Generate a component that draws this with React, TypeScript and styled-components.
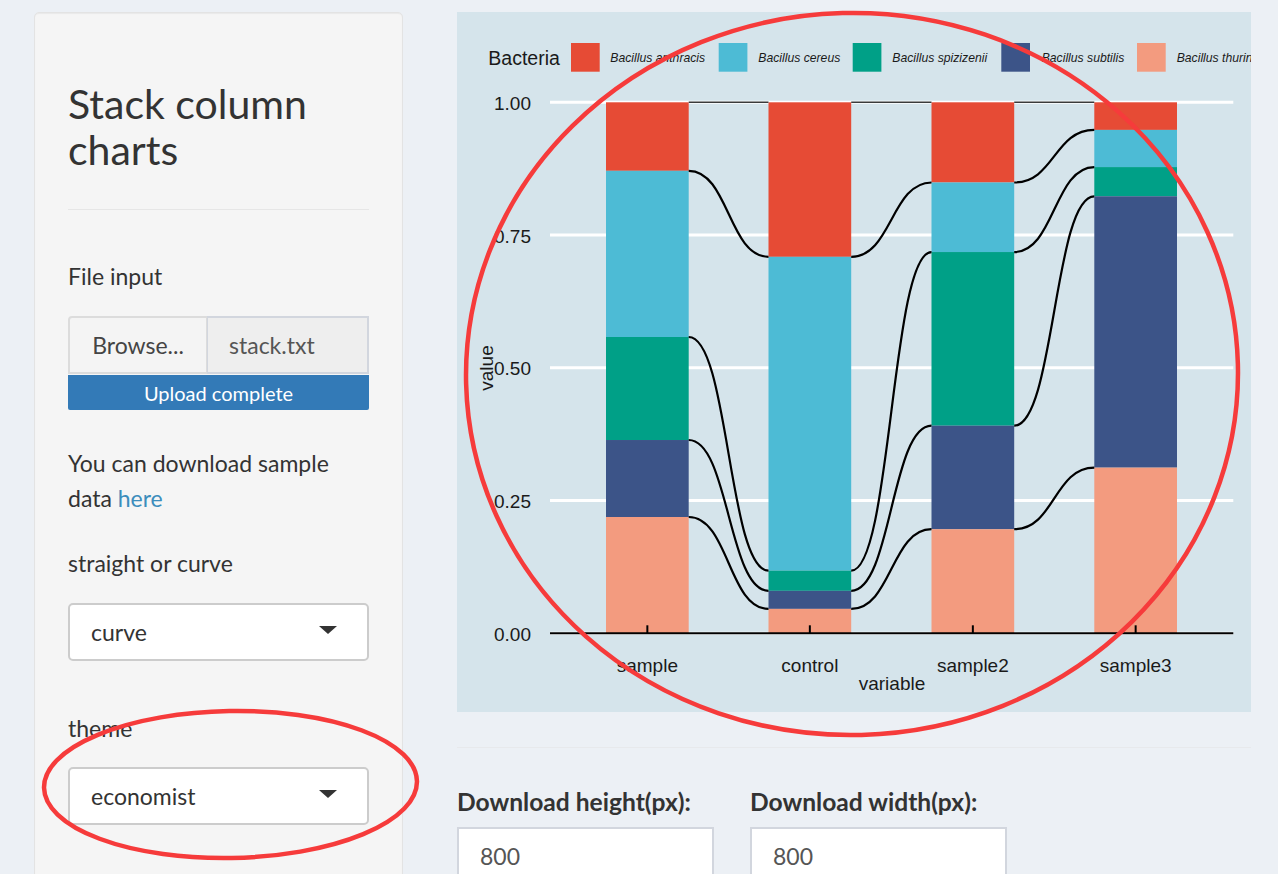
import React from 'react';
import styled, { createGlobalStyle } from 'styled-components';

const GlobalStyle = createGlobalStyle`
  html, body {
    margin: 0;
    padding: 0;
    overflow: hidden;
    background: #ecf0f5;
  }
  body {
    font-family: "Lato", "Noto Sans", sans-serif;
    color: #333;
  }
`;

const Page = styled.div`
  position: relative;
  display: flex;
  align-items: flex-start;
  gap: 54px;
  width: 1278px;
  height: 874px;
  box-sizing: border-box;
  padding: 12px 0 0 34px;
  overflow: hidden;
`;

const Sidebar = styled.aside`
  flex: 0 0 auto;
  width: 369px;
  height: 900px;
  box-sizing: border-box;
  background: #f5f5f5;
  border: 1px solid #e3e3e3;
  border-radius: 5px;
  box-shadow: inset 0 1px 1px rgba(0, 0, 0, 0.05);
  padding: 68px 33px 0;
  display: flex;
  flex-direction: column;
`;

const Title = styled.h2`
  margin: 0;
  font-size: 41px;
  line-height: 46px;
  font-weight: 400;
  color: #333;
`;

const Rule = styled.hr<{ $mt: number; $color?: string }>`
  margin: ${(p) => p.$mt}px 0 0;
  border: 0;
  border-top: 1px solid ${(p) => p.$color || '#e6e6e6'};
  height: 0;
`;

const Label = styled.div<{ $mt: number }>`
  margin-top: ${(p) => p.$mt}px;
  font-size: 23px;
  line-height: 30px;
  color: #333;
`;

const Paragraph = styled.p<{ $mt: number }>`
  margin: ${(p) => p.$mt}px 0 0;
  font-size: 23px;
  line-height: 35px;
  color: #333;
`;

const Link = styled.a`
  color: #3c8dbc;
  text-decoration: none;
`;

const FileGroup = styled.div<{ $mt: number }>`
  margin-top: ${(p) => p.$mt}px;
  display: flex;
  height: 58px;
`;

const BrowseButton = styled.div`
  flex: 0 0 139px;
  box-sizing: border-box;
  display: flex;
  align-items: center;
  justify-content: center;
  background: #f4f4f4;
  border: 2px solid #dcdcdc;
  border-right-width: 1px;
  border-radius: 4px 0 0 0;
  font-size: 23px;
  color: #444;
`;

const FileName = styled.div`
  flex: 1 1 auto;
  box-sizing: border-box;
  display: flex;
  align-items: center;
  padding-left: 21px;
  background: #eeeeee;
  border: 2px solid #d2d6de;
  border-left-width: 1px;
  font-size: 23px;
  color: #555;
`;

const Progress = styled.div`
  margin-top: 1px;
  height: 35px;
  background: #337ab7;
  border-radius: 0 0 2px 2px;
  color: #fff;
  font-size: 20px;
  display: flex;
  align-items: center;
  justify-content: center;
`;

const SelectBox = styled.div<{ $mt: number }>`
  margin-top: ${(p) => p.$mt}px;
  height: 58px;
  box-sizing: border-box;
  background: #fff;
  border: 2px solid #cccccc;
  border-radius: 5px;
  display: flex;
  align-items: center;
  justify-content: space-between;
  padding: 0 30px 0 21px;
  font-size: 23px;
  color: #333;
`;

const Caret = styled.span`
  width: 0;
  height: 0;
  border-left: 9px solid transparent;
  border-right: 9px solid transparent;
  border-top: 8px solid #333;
  margin-top: -4px;
`;

const Main = styled.main`
  flex: 0 0 auto;
  width: 794px;
  display: flex;
  flex-direction: column;
`;

const ChartPanel = styled.div`
  width: 794px;
  height: 700px;
  background: #d5e4eb;
`;

const DownloadRow = styled.div`
  margin-top: 39px;
  display: flex;
  gap: 36px;
`;

const Field = styled.div`
  width: 257px;
  display: flex;
  flex-direction: column;
`;

const FieldLabel = styled.label`
  font-size: 24.6px;
  font-weight: 700;
  line-height: 30px;
  color: #333;
  white-space: nowrap;
`;

const NumberBox = styled.div`
  margin-top: 10px;
  height: 60px;
  box-sizing: border-box;
  background: #fff;
  border: 2px solid #d2d6de;
  padding: 13px 0 0 21px;
  font-size: 23px;
  color: #555;
`;

const Overlay = styled.svg`
  position: absolute;
  left: 0;
  top: 0;
  width: 1278px;
  height: 874px;
  pointer-events: none;
`;

const COLORS = ['#E64B35', '#4DBBD5', '#00A087', '#3C5488', '#F39B7F'];
const SPECIES = [
  'Bacillus anthracis',
  'Bacillus cereus',
  'Bacillus spizizenii',
  'Bacillus subtilis',
  'Bacillus thuringiensis',
];
const GROUPS = ['sample', 'control', 'sample2', 'sample3'];
const STACKS = [
  [1, 0.871, 0.558, 0.364, 0.219, 0],
  [1, 0.709, 0.118, 0.08, 0.046, 0],
  [1, 0.849, 0.718, 0.391, 0.196, 0],
  [1, 0.948, 0.878, 0.823, 0.312, 0],
];
const BAR_X = [149, 311.5, 474.5, 637.3];
const BAR_W = 82.7;
const yOf = (v: number) => 621.3 - 531 * v;

const LEGEND_KEYS = [114, 261.7, 395.7, 544.3, 680];
const LEGEND_TEXT = [153.3, 301.3, 435.3, 584.7, 719.7];

const Chart: React.FC = () => {
  const curves: { d: string; top: boolean }[] = [];
  for (let j = 0; j < 3; j++) {
    const x1 = BAR_X[j] + BAR_W;
    const x2 = BAR_X[j + 1];
    const xm = (x1 + x2) / 2;
    for (let k = 0; k < 5; k++) {
      const y1 = yOf(STACKS[j][k]);
      const y2 = yOf(STACKS[j + 1][k]);
      curves.push({ d: `M${x1} ${y1} C${xm} ${y1} ${xm} ${y2} ${x2} ${y2}`, top: k === 0 });
    }
  }
  return (
    <svg width="794" height="700" viewBox="0 0 794 700" style={{ display: 'block' }}>
      <g fontFamily='"Liberation Sans", Arial, sans-serif' fill="#1a1a1a">
        <text x="31.3" y="46" fontSize="19.5" dominantBaseline="central">Bacteria</text>
        {SPECIES.map((s, i) => (
          <g key={s}>
            <rect x={LEGEND_KEYS[i]} y="31" width="28.7" height="28.7" fill={COLORS[i]} />
            <text x={LEGEND_TEXT[i]} y="46" fontSize="12.2" fontStyle="italic" dominantBaseline="central">
              {s}
            </text>
          </g>
        ))}
        {[0, 0.25, 0.5, 0.75, 1].map((v) => (
          <g key={v}>
            <line x1="93" x2="776.3" y1={yOf(v)} y2={yOf(v)} stroke="#ffffff" strokeWidth="3" />
            <text x="74" y={yOf(v) + 1} fontSize="19" textAnchor="end" dominantBaseline="central">
              {v.toFixed(2)}
            </text>
          </g>
        ))}
        {STACKS.map((st, j) =>
          COLORS.map((c, i) => (
            <rect
              key={`${j}-${i}`}
              x={BAR_X[j]}
              y={yOf(st[i])}
              width={BAR_W}
              height={yOf(st[i + 1]) - yOf(st[i])}
              fill={c}
            />
          ))
        )}
        {curves.map((c, i) => (
          <path
            key={i}
            d={c.d}
            fill="none"
            stroke={c.top ? '#3a3a3a' : '#000'}
            strokeWidth={c.top ? 1.6 : 2.2}
          />
        ))}
        <line x1="93" x2="776.3" y1={yOf(0)} y2={yOf(0)} stroke="#000" strokeWidth="2" />
        {GROUPS.map((g, j) => {
          const cx = BAR_X[j] + BAR_W / 2;
          return (
            <g key={g}>
              <line x1={cx} x2={cx} y1={yOf(0) - 8} y2={yOf(0)} stroke="#000" strokeWidth="2" />
              <text x={cx} y="653" fontSize="19" textAnchor="middle" dominantBaseline="central">
                {g}
              </text>
            </g>
          );
        })}
        <text x="435" y="671" fontSize="19" textAnchor="middle" dominantBaseline="central">variable</text>
        <text
          x="29"
          y="356"
          fontSize="19"
          textAnchor="middle"
          dominantBaseline="central"
          transform="rotate(-90 29 356)"
        >
          value
        </text>
      </g>
    </svg>
  );
};

export default function App() {
  return (
    <>
      <GlobalStyle />
      <Page>
        <Sidebar>
          <Title>Stack column charts</Title>
          <Rule $mt={36} />
          <Label $mt={51}>File input</Label>
          <FileGroup $mt={25}>
            <BrowseButton>Browse...</BrowseButton>
            <FileName>stack.txt</FileName>
          </FileGroup>
          <Progress>Upload complete</Progress>
          <Paragraph $mt={36}>
            You can download sample data <Link href="#">here</Link>
          </Paragraph>
          <Label $mt={32}>straight or curve</Label>
          <SelectBox $mt={25}>
            <span>curve</span>
            <Caret />
          </SelectBox>
          <Label $mt={52}>theme</Label>
          <SelectBox $mt={24}>
            <span>economist</span>
            <Caret />
          </SelectBox>
        </Sidebar>
        <Main>
          <ChartPanel>
            <Chart />
          </ChartPanel>
          <Rule $mt={35} $color="#e7e9ec" />
          <DownloadRow>
            <Field>
              <FieldLabel>Download height(px):</FieldLabel>
              <NumberBox>800</NumberBox>
            </Field>
            <Field>
              <FieldLabel>Download width(px):</FieldLabel>
              <NumberBox>800</NumberBox>
            </Field>
          </DownloadRow>
        </Main>
        <Overlay viewBox="0 0 1278 874">
          <ellipse cx="852" cy="374" rx="386" ry="361" fill="none" stroke="#f63b3b" strokeWidth="4.5" transform="rotate(-1.5 852 374)" />
          <ellipse cx="230.5" cy="784.5" rx="186.5" ry="73.5" fill="none" stroke="#f63b3b" strokeWidth="4.5" transform="rotate(-1 230.5 784.5)" />
        </Overlay>
      </Page>
    </>
  );
}
